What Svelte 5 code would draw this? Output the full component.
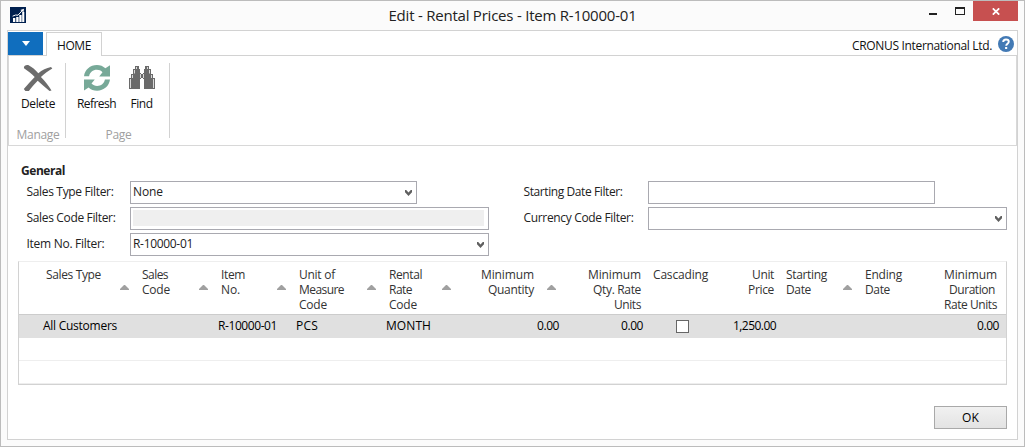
<script>
  // Tracks a label so that its run of text takes up the given width.
  function fit(node, width) {
    const natural = node.getBoundingClientRect().width;
    const count = node.textContent.length;
    node.style.letterSpacing = `${(width - natural) / count}px`;
  }

  const left = [
    { label: 'Sales Type Filter:', lw: 87, value: 'None', vw: 30, drop: true, short: true },
    { label: 'Sales Code Filter:', lw: 89, disabled: true },
    { label: 'Item No. Filter:', lw: 78, value: 'R-10000-01', vw: 60, drop: true }
  ];
  const right = [
    { label: 'Starting Date Filter:', lw: 99, short: true },
    { label: 'Currency Code Filter:', lw: 110, drop: true }
  ];
  const columns = [
    { lines: [['Sales Type', 55]], sort: true, cell: 'All Customers', cw: 74 },
    { lines: [['Sales', 26], ['Code', 28]], sort: true },
    { lines: [['Item', 24], ['No.', 19]], sort: true, cell: 'R-10000-01', cw: 59 },
    { lines: [['Unit of', 36], ['Measure', 45], ['Code', 28]], sort: true, cell: 'PCS', cw: 22 },
    { lines: [['Rental', 33], ['Rate', 23], ['Code', 28]], sort: true, cell: 'MONTH', cw: 45 },
    { lines: [['Minimum', 53], ['Quantity', 46]], sort: true, end: true, cell: '0.00', cw: 22 },
    { lines: [['Minimum', 53], ['Qty. Rate', 48], ['Units', 27]], end: true, cell: '0.00', cw: 22 },
    { lines: [['Cascading', 55]], check: true },
    { lines: [['Unit', 22], ['Price', 26]], end: true, cell: '1,250.00', cw: 43 },
    { lines: [['Starting', 41], ['Date', 25]], sort: true },
    { lines: [['Ending', 37], ['Date', 25]] },
    { lines: [['Minimum', 53], ['Duration', 46], ['Rate Units', 53]], end: true, cell: '0.00', cw: 22 }
  ];
</script>

{#snippet field(f)}
  <div class="field">
    <label><span use:fit={f.lw}>{f.label}</span></label>
    <div class="box" class:short={f.short}>
      {#if f.disabled}<div class="disabled"></div>{/if}
      {#if f.value}<span use:fit={f.vw}>{f.value}</span>{/if}
      {#if f.drop}
        <svg class="chev" width="7" height="6" viewBox="0 0 7 6"><path d="M0 0h1.2L3.500 2.400 5.800 0H7V2.200L3.500 6 0 2.200z" fill="#606060" /></svg>
      {/if}
    </div>
  </div>
{/snippet}

<div class="window">
  <header>
    <svg class="logo" width="16" height="16" viewBox="0 0 16 16">
      <rect width="16" height="16" fill="#00204f" />
      <path d="M3 11h2.300v4H3zM6.200 10h2.400v5H6.200zM9.300 8h2.300v7H9.300zM12.200 5h2.100v10h-2.100z" fill="#fff" />
      <path d="M2.600 9.200l3-1.200 2.400.2 4.600-5" fill="none" stroke="#fff" stroke-width="1" />
      <path d="M10.400 2.900L14 1.800l-.5 3.500z" fill="#fff" />
    </svg>
    <h1><span use:fit={248}>Edit - Rental Prices - Item R-10000-01</span></h1>
    <div class="controls">
      <i class="min"></i>
      <i class="max"></i>
      <div class="close">
        <svg width="8" height="7" viewBox="0 0 8 7"><path d="M.8.3l6.400 6.400M7.200.3L.8 6.700" stroke="#fff" stroke-width="1.700" /></svg>
      </div>
    </div>
  </header>

  <main>
    <nav>
      <div class="app"><svg width="8" height="5" viewBox="0 0 8 5"><path d="M0 0h8L4 5z" fill="#fff" /></svg></div>
      <div class="tab"><span use:fit={34}>HOME</span></div>
      <div class="company"><span use:fit={140}>CRONUS International Ltd.</span></div>
      <svg class="help" width="16" height="16" viewBox="0 0 16 16">
        <circle cx="8" cy="8" r="8" fill="#437ab5" />
        <path d="M5.200 6.100C5.200 4.300 6.300 3.500 8 3.500s2.800.9 2.800 2.300c0 1.900-2.600 2-2.600 4" fill="none" stroke="#fff" stroke-width="1.900" />
        <rect x="7.100" y="11" width="2.100" height="2" fill="#fff" />
      </svg>
    </nav>

    <section class="ribbon">
      <div class="group manage">
        <div class="tools">
          <div class="tool">
            <svg width="30" height="27" viewBox="0 0 30 27">
              <path d="M1 3.300C.5 1 2.600-.3 5.200.1c4 2 7 4.900 10.100 8.100C19 5.200 23.500 3 28 2.100l1.300 1.400C25 6 21.200 8.800 17.900 12.100c4.500 4.500 7.300 8.500 10.600 13.400l-2 .5C22 22.300 18.500 19 14.700 15.800 11 19.300 8.400 22.900 5.900 26.100H2.400L.8 24C4.600 19.600 8.100 15.600 11.700 11.900 8.500 8.900 4.600 5.600 1 3.300z" fill="#6c6c6c" />
            </svg>
            <span use:fit={34}>Delete</span>
          </div>
        </div>
        <div class="caption"><span use:fit={43}>Manage</span></div>
      </div>
      <div class="group page">
        <div class="tools">
          <div class="tool refresh">
            <svg width="26" height="26" viewBox="0 0 26 26">
              <g fill="#77a998">
                <path d="M0 11.200C.8 4.700 6.200 0 12.900 0c3.300 0 6.200 1.200 8.500 3.300L26 .2v11.200H15.200l3.300-4.200C16.900 5.600 15.200 4.800 12.900 4.800c-4.100 0-7 2.500-7.800 6.400z" />
                <path d="M0 11.200C.8 4.700 6.200 0 12.900 0c3.300 0 6.200 1.200 8.500 3.300L26 .2v11.200H15.200l3.300-4.200C16.900 5.600 15.200 4.800 12.900 4.800c-4.100 0-7 2.500-7.800 6.400z" transform="rotate(180 13 12.900)" />
              </g>
            </svg>
            <span use:fit={39}>Refresh</span>
          </div>
          <div class="tool find">
            <svg width="26" height="23" viewBox="0 0 26 23">
              <path d="M6 0h4v3h1v4h1v1h2V7h1V3h1V0h4v3h2v5h2v4h2v11H15V13h-1v-1h-2v1h-1v10H0V12h2V8h2V3h2z" fill="#6a6a6a" />
              <path d="M7.500 1v2M18.500 1v2M5.500 4v3.500M20.500 4v3.500M3.500 9v3M22.500 9v3M1.500 13v9M24.500 13v9M11.500 8v4M14.500 8v4" stroke="#fff" stroke-width=".75" fill="none" />
            </svg>
            <span use:fit={22}>Find</span>
          </div>
        </div>
        <div class="caption"><span use:fit={26}>Page</span></div>
      </div>
    </section>

    <section class="body">
      <h2><span use:fit={44}>General</span></h2>
      <div class="form">
        <div class="side">{#each left as f}{@render field(f)}{/each}</div>
        <div class="side second">{#each right as f}{@render field(f)}{/each}</div>
      </div>

      <div class="table">
        <div class="row head">
          {#each columns as c}
            <div class="th" class:end={c.end} class:sorted={c.sort}>
              {#each c.lines as [text, w]}<div><span use:fit={w}>{text}</span></div>{/each}
              {#if c.sort}<svg class="sort" width="9" height="5" viewBox="0 0 9 5"><path d="M4 0h1l4 4v1H0V4z" fill="#a0a0a0" /></svg>{/if}
            </div>
          {/each}
        </div>
        <div class="row selected">
          {#each columns as c}
            <div class="td" class:end={c.end} class:center={c.check}>
              {#if c.check}<i class="check"></i>{:else if c.cell}<span use:fit={c.cw}>{c.cell}</span>{/if}
            </div>
          {/each}
        </div>
        <div class="row blank"></div>
        <div class="row blank"></div>
      </div>

      <footer><button><span use:fit={17}>OK</span></button></footer>
    </section>
  </main>
</div>

<style>
  :global(body) { margin: 0; }
  * { box-sizing: border-box; }
  span { display: inline-block; white-space: nowrap; }
  svg { display: block; flex: none; }
  .window {
    width: 1025px; height: 447px; border: 1px solid #bcbcbc; background: #fbfbfb;
    padding: 0 6px 6px; display: flex; flex-direction: column; overflow: hidden;
    font: 12px/15px "Open Sans", "Noto Sans", sans-serif; color: #222;
  }
  header { height: 29px; flex: none; display: grid; grid-template-columns: 160px 1fr 160px; }
  .logo { margin: 6px 0 0 3px; }
  h1 { margin: 4px 0 0; font-size: 15px; line-height: 20px; font-weight: 400; text-align: center; }
  .controls { display: flex; justify-content: flex-end; }
  .min { width: 8px; height: 2px; background: #222; margin: 12px 18px 0 0; }
  .max { width: 10px; height: 8px; border: 1px solid #222; border-top-width: 2px; margin: 6px 8px 0 0; }
  .close { width: 45px; height: 20px; background: #c75050; display: grid; place-items: center; }
  main { flex: 1; border: 1px solid #d2d2d2; background: #fff; display: flex; flex-direction: column; }
  nav { height: 25px; display: flex; flex: none; border-bottom: 1px solid #d2d2d2; padding-right: 3px; }
  .app { width: 35px; height: 23px; margin-top: 1px; background: #106ebe; display: grid; place-items: center; }
  .tab {
    width: 56px; height: 24px; margin: 1px 0 -1px 3px; border: 1px solid #d2d2d2; border-bottom: 0;
    background: #fff; padding-top: 5px; text-align: center; color: #111; position: relative;
  }
  .company { margin: 7px 6px 0 auto; color: #111; }
  .help { margin-top: 5px; }
  .ribbon { height: 90px; flex: none; display: flex; border: 1px solid #d8d8d8; border-top: 0; padding-top: 7px; }
  .group { height: 75px; border-right: 1px solid #d2d2d2; display: flex; flex-direction: column; }
  .manage { width: 57px; }
  .page { width: 104px; }
  .tools { flex: 1; display: flex; }
  .tool { display: flex; flex-direction: column; align-items: center; color: #111; width: 58px; height: 48px; justify-content: space-between; padding-top: 2px; }
  .manage .tool { width: 58px; flex: none; }
  .refresh { width: 47px; margin-left: 7px; }
  .find { width: 43px; padding-top: 3px; }
  .caption { text-align: center; color: #a0a0a0; height: 11px; }
  .manage .caption { padding-left: 2px; }
  .page .caption { padding-left: 2px; }
  .body { padding: 17px 10px 0; display: flex; flex-direction: column; }
  h2 { margin: 0 0 0 3px; font-size: 12px; line-height: 15px; font-weight: 700; height: 18px; }
  .form { display: grid; grid-template-columns: 497px 492px; padding-left: 8px; }
  .side { display: flex; flex-direction: column; gap: 3px; }
  .field { display: grid; grid-template-columns: 104px 359px; height: 23px; }
  .second .field { grid-template-columns: 125px 359px; }
  label { padding: 3px 0 0 0.5px; }
  .box { border: 1px solid #a9a9b0; display: flex; align-items: center; padding: 0 4px 2px 2px; color: #222; }
  .short { width: 287px; }
  .chev { margin: 3px 0 0 auto; }
  .disabled { background: #efefef; height: 16px; width: 351px; margin: 1px 0 0; }
  .table { width: 989px; height: 124px; margin-top: 5px; border: 1px solid #d2d2d2; border-top-color: #eee; }
  .row { display: grid; grid-template-columns: 96px 79px 78px 90px 75px 105px 84px 71px 62px 79px 79px 65px; padding-left: 21px; }
  .head { height: 53px; border-bottom: 1px solid #ccc; }
  .th { position: relative; padding: 5px 6px 0; color: #333; }
  .th.end { text-align: right; }
  .th.end:last-child { padding-right: 8px; }
  .th.end.sorted { padding: 5px 29px 0 0; }
  .sort { position: absolute; right: 7px; top: 23px; }
  .selected { height: 23px; background: #e0e0e0; color: #000; }
  .td { padding: 3px 3px 0; }
  .td.end { text-align: right; padding-right: 4px; }
  .center { display: flex; justify-content: center; padding-top: 5px; }
  .check { width: 13px; height: 13px; border: 1px solid #666; background: #fff; }
  .blank { height: 23px; border-bottom: 1px solid #eee; }
  footer { display: flex; justify-content: flex-end; margin-top: 21px; }
  button { width: 73px; height: 23px; border: 1px solid #a9a9a9; background: linear-gradient(#f1f1f1, #e3e3e3); font: inherit; color: #000; padding: 0; }
</style>
